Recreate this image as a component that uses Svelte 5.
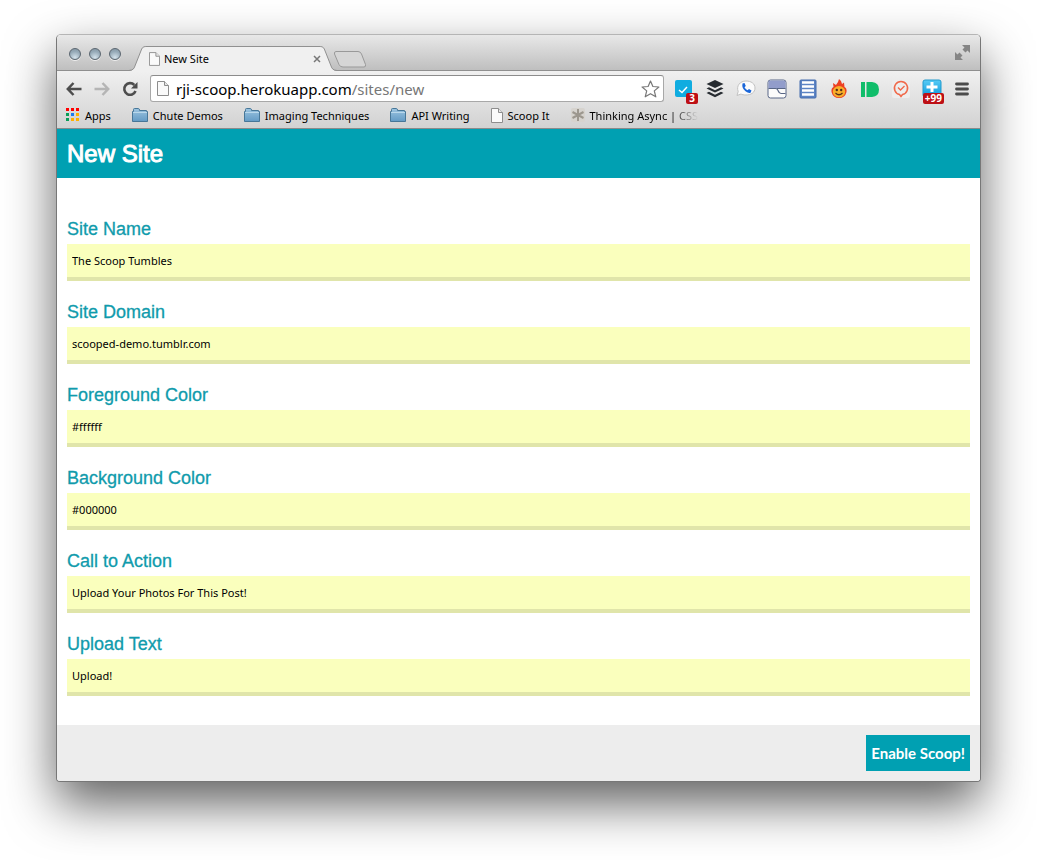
<script>
  let fields = $state([
    { id: 'site-name', label: 'Site Name', value: 'The Scoop Tumbles' },
    { id: 'site-domain', label: 'Site Domain', value: 'scooped-demo.tumblr.com' },
    { id: 'foreground', label: 'Foreground Color', value: '#ffffff' },
    { id: 'background', label: 'Background Color', value: '#000000' },
    { id: 'call-to-action', label: 'Call to Action', value: 'Upload Your Photos For This Post!' },
    { id: 'upload-text', label: 'Upload Text', value: 'Upload!' }
  ]);

  const bookmarks = [
    { icon: 'apps', text: 'Apps' },
    { icon: 'folder', text: 'Chute Demos' },
    { icon: 'folder', text: 'Imaging Techniques' },
    { icon: 'folder', text: 'API Writing' },
    { icon: 'page', text: 'Scoop It' },
    { icon: 'star', text: 'Thinking Async | CSS', fade: true }
  ];

  const dots = ['#f00', '#f00', '#f00', '#0a9d58', '#1a7cf0', '#ffb000', '#0a9d58', '#ffb000', '#ffb000'];
</script>

{#snippet page(w, h)}
  <svg width={w} height={h} viewBox="0 0 12 15" aria-hidden="true">
    <path d="M.5.5H7.500L11.500 4.500V14.500H.5Z" fill="#fafafa" stroke="#8d8d8d" />
    <path d="M7.500.5V4.500H11.500" fill="#e6e6e6" stroke="#8d8d8d" />
  </svg>
{/snippet}

<div class="window">
  <header class="tabstrip">
    <div class="lights">
      <button aria-label="Close window"></button>
      <button aria-label="Minimize window"></button>
      <button aria-label="Zoom window"></button>
    </div>
    <div class="tab">
      <svg class="shape" viewBox="0 0 210 25" preserveAspectRatio="none" aria-hidden="true">
        <path d="M0 25C4 24.500 5 23 6 20L12 5C13 2 14 .5 17 .5H193C196 .5 197 2 198 5L204 20C205 23 206 24.500 210 25Z" fill="#f0f0f0" />
        <path d="M0 24.500C4 24 5 23 6 20L12 5C13 2 14 .5 17 .5H193C196 .5 197 2 198 5L204 20C205 23 206 24 210 24.500" fill="none" stroke="#8f8f8f" />
      </svg>
      <span class="tab-icon">{@render page(11, 14)}</span>
      <span class="tab-title">New Site</span>
      <button class="close" aria-label="Close tab">
        <svg width="8" height="8" viewBox="0 0 8 8"><path d="M1 1L7 7M7 1L1 7" stroke="#777" stroke-width="1.500" /></svg>
      </button>
    </div>
    <button class="newtab" aria-label="New tab">
      <svg width="34" height="17" viewBox="0 0 34 17"><path d="M3 .5H25Q27.500.5 28.500 3L32.500 13.500Q33 16 31 16H10Q7 16 6 13.500L1.500 3Q1 .5 3 .5Z" fill="#d6d6d6" stroke="#999" /></svg>
    </button>
    <button class="expand" aria-label="Full screen">
      <svg width="15" height="15" viewBox="0 0 15 15" fill="#858585"><path d="M7 0H15V8L12.500 5.500L10.500 7.500L7.500 4.500L9.500 2.500ZM8 15H0V7L2.500 9.500L4.500 7.500L7.500 10.500L5.500 12.500Z" /></svg>
    </button>
  </header>

  <nav class="toolbar" aria-label="Browser">
    <div class="row">
      <button class="nav" aria-label="Back">
        <svg width="16" height="14" viewBox="0 0 16 14" fill="none" stroke="#4d4d4d" stroke-width="2.500"><path d="M2 7H15.500M7.500 1L1.800 7L7.500 13" /></svg>
      </button>
      <button class="nav" aria-label="Forward">
        <svg width="16" height="14" viewBox="0 0 16 14" fill="none" stroke="#b5b5b5" stroke-width="2.500"><path d="M.5 7H14M8.500 1L14.200 7L8.500 13" /></svg>
      </button>
      <button class="nav" aria-label="Reload">
        <svg width="16" height="16" viewBox="0 0 16 16"><path d="M12.300 4A5.800 5.800 0 1 0 13.500 10" fill="none" stroke="#4d4d4d" stroke-width="2.600" /><path d="M15.500 1V7.500H9Z" fill="#4d4d4d" /></svg>
      </button>
      <div class="omnibox">
        {@render page(12, 15)}
        <span class="url">rji-scoop.herokuapp.com<span>/sites/new</span></span>
        <button aria-label="Bookmark this page">
          <svg width="19" height="18" viewBox="0 0 19 18"><path d="M9.500 1L11.900 6.500L17.900 7L13.300 10.900L14.800 16.800L9.500 13.700L4.200 16.800L5.700 10.900L1.100 7L7.100 6.500Z" fill="#fff" stroke="#777" stroke-width="1.200" stroke-linejoin="round" /></svg>
        </button>
      </div>
      <div class="extensions">
        <button aria-label="Tasks">
          <svg width="20" height="20" viewBox="0 0 20 20"><rect x="1" y="1" width="17" height="17" rx="2" fill="#10ace0" /><path d="M5 11L8 13.500L13 8" fill="none" stroke="#fff" stroke-width="1.500" /></svg>
          <span class="badge">3</span>
        </button>
        <button aria-label="Layers">
          <svg width="20" height="20" viewBox="0 0 20 20" fill="#262b30"><path d="M10 1L18.500 5L10 9L1.500 5Z" /><path d="M1.500 9.500L4 8.300L10 11.200L16 8.300L18.500 9.500L10 13.600Z" /><path d="M1.500 14L4 12.800L10 15.700L16 12.800L18.500 14L10 18.200Z" /></svg>
        </button>
        <button aria-label="Phone">
          <svg width="20" height="20" viewBox="0 0 20 20"><path d="M10 2C15 2 19 4.500 19 9S15 16 10 16C7.500 16 6 15.600 5 15L1 16.500L2.200 12.500C0 7 4 2 10 2Z" fill="#fbfbfb" stroke="#c2c2c2" /><path d="M6.500 4.500L8.500 4L9.800 7L8.500 8.300Q9.500 10.200 11.500 11.200L13 10L15.500 11.600L14.500 13.800Q12.500 14.500 9.500 12.300Q5.500 9 6.500 4.500Z" fill="#1a66d9" /></svg>
        </button>
        <button aria-label="Window panes">
          <svg width="20" height="20" viewBox="0 0 20 20"><rect x="1" y="1" width="18" height="18" rx="2.500" fill="#fbfbfb" stroke="#596787" /><path d="M1.500 2.500Q1.500 1.500 3 1.500H17Q18.500 1.500 18.500 3V9.500H1.500Z" fill="#929dcb" /><path d="M1.500 9.500H8.500Q10.500 9.500 11.300 12T14 14.500H18.500" fill="none" stroke="#596787" stroke-width="1.200" /><path d="M9.500 9.500H18.500" stroke="#596787" /></svg>
        </button>
        <button aria-label="List">
          <svg width="20" height="20" viewBox="0 0 20 20"><rect x="2" y="1" width="16" height="18" rx="1" fill="#5c84c5" stroke="#456dae" /><path d="M4 3.500H16M4 7.500H16M4 11.500H16M4 15.500H16" stroke="#fff" stroke-width="2.500" /></svg>
        </button>
        <button aria-label="Flame">
          <svg width="20" height="20" viewBox="0 0 20 20"><path d="M10 0Q13 2 13 5L15 3.500L15.500 8Q18 9 17.500 13Q16 19 10 19T2.500 13Q2 9 4.500 8L4 4L7 6Q9.500 3 10 0Z" fill="#ec4023" /><ellipse cx="10" cy="12.700" rx="6.200" ry="5.600" fill="#f9ae2a" /><circle cx="7.800" cy="11" r="1.200" fill="#57301a" /><circle cx="12.200" cy="11" r="1.200" fill="#57301a" /><path d="M6.500 14Q10 17.500 13.500 14" fill="none" stroke="#57301a" stroke-width="1.200" /></svg>
        </button>
        <button aria-label="Push">
          <svg width="20" height="20" viewBox="0 0 20 20" fill="#10bd6a"><path d="M1 3H5V18H1ZM6.500 3H12Q19 3.500 19 10.500T12 18H6.500Z" /></svg>
        </button>
        <button aria-label="Check marker">
          <svg width="20" height="20" viewBox="0 0 20 20"><rect x="1" y="1" width="18" height="18" rx="2" fill="#ededed" /><path d="M8.500 15.500A6.600 6.600 0 1 1 11.500 15.500L10 17.500Z" fill="none" stroke="#f0694a" stroke-width="1.500" /><path d="M7 8.500L9.500 11L13.500 7" fill="none" stroke="#f0694a" stroke-width="1.400" /></svg>
        </button>
        <button aria-label="Add">
          <svg width="20" height="20" viewBox="0 0 20 20"><defs><linearGradient id="sky" x2="0" y2="1"><stop stop-color="#58cbf5" /><stop offset="1" stop-color="#0b98dc" /></linearGradient></defs><rect x="1" y="1" width="18" height="17" rx="2" fill="url(#sky)" stroke="#239bcd" /><path d="M8.500 3H11.500V6.500H15.500V9.500H11.500V13H8.500V9.500H4.500V6.500H8.500Z" fill="#fff" /></svg>
          <span class="badge wide">+99</span>
        </button>
        <button class="menu" aria-label="Menu">
          <svg width="14" height="14" viewBox="0 0 14 14"><path d="M1.500 2H12.500M1.500 7H12.500M1.500 12H12.500" stroke="#4b4b4b" stroke-width="2.800" stroke-linecap="round" /></svg>
        </button>
      </div>
    </div>

    <div class="bookmarks">
      {#each bookmarks as mark}
        <a href="#bookmark" class:fade={mark.fade}>
          {#if mark.icon === 'apps'}
            <svg width="14" height="14" viewBox="0 0 14 14" aria-hidden="true">
              {#each dots as fill, i}
                <rect x={(i % 3) * 5} y={Math.floor(i / 3) * 5} width="3" height="3" {fill} />
              {/each}
            </svg>
          {:else if mark.icon === 'folder'}
            <svg width="16" height="15" viewBox="0 0 16 15" aria-hidden="true">
              <defs><linearGradient id="folder" x2="0" y2="1"><stop stop-color="#9cc4e0" /><stop offset="1" stop-color="#639bc5" /></linearGradient></defs>
              <path d="M.5 13.500V3.500H1.500V1.500Q1.500.5 2.500.5H6.500Q7.500.5 7.500 2.500H14.500V3.500H15.500V13.500Z" fill="url(#folder)" stroke="#477798" />
              <path d="M1 4.500H15" stroke="#b9d8eb" />
            </svg>
          {:else if mark.icon === 'page'}
            {@render page(12, 15)}
          {:else}
            <svg width="14" height="14" viewBox="0 0 14 14" aria-hidden="true"><rect width="14" height="14" rx="2" fill="#d6d3ce" /><path d="M7 1V13M1.500 4L12.500 10M12.500 4L1.500 10" stroke="#9c978e" stroke-width="2" /></svg>
          {/if}
          <span>{mark.text}</span>
        </a>
      {/each}
    </div>
  </nav>

  <main>
    <h1>New Site</h1>
    <form onsubmit={(e) => e.preventDefault()}>
      <div class="fields">
        {#each fields as field}
          <div class="field">
            <label for={field.id}>{field.label}</label>
            <input id={field.id} type="text" bind:value={field.value} />
          </div>
        {/each}
      </div>
      <footer><button type="submit">Enable Scoop!</button></footer>
    </form>
  </main>
</div>

<style>
  :global(body) {
    background: #fff;
    overflow-x: hidden;
  }
  * { box-sizing: border-box; }
  svg { display: block; flex: none; }
  button {
    padding: 0;
    border: 0;
    background: none;
    font: inherit;
  }
  .window {
    margin: 34px 56px 78px;
    border: 1px solid #777;
    border-top-color: #b5b5b5;
    border-radius: 5px 5px 4px 4px;
    background: #fff;
    background-clip: padding-box;
    box-shadow: 0 22px 50px rgba(0, 0, 0, 0.62);
    font-family: "Noto Sans", sans-serif;
    font-size: 11px;
    color: #000;
  }
  .tabstrip {
    display: flex;
    height: 36px;
    padding-left: 12px;
    align-items: flex-end;
    border-bottom: 1px solid #8f8f8f;
    border-radius: 4px 4px 0 0;
    background: linear-gradient(#e8e8e8, #bfbfbf);
  }
  .lights {
    display: flex;
    gap: 8px;
    align-self: center;
    padding-top: 2px;
  }
  .lights button {
    width: 12px;
    height: 12px;
    border: 1px solid #5b6670;
    border-radius: 50%;
    background: radial-gradient(circle at 50% 85%, #d5e3ec, #96aab8 60%, #8193a0);
    box-shadow: 0 1px 0 #eee;
  }
  .tab {
    position: relative;
    display: flex;
    align-items: center;
    width: 208px;
    height: 25px;
    margin: 0 -4px -1px 8px;
    padding: 0 16px 0 20px;
  }
  .shape {
    position: absolute;
    inset: 0;
    width: 100%;
    height: 100%;
  }
  .tab-icon, .tab-title, .close { position: relative; }
  .tab-title { flex: 1; margin-left: 4px; }
  .newtab { margin-bottom: 2px; }
  .expand { margin: 0 10px 10px auto; }
  .toolbar {
    border-bottom: 1px solid #8b8b8b;
    background: linear-gradient(#f0f0f0, #d2d2d2);
  }
  .row {
    display: flex;
    align-items: center;
    padding: 4px 9px 0;
    gap: 12px;
  }
  .nav {
    display: grid;
    place-items: center;
    width: 16px;
    height: 24px;
  }
  .omnibox {
    display: flex;
    flex: 1;
    align-items: center;
    height: 27px;
    padding: 0 3px 0 6px;
    border: 1px solid #a8a8a8;
    border-top-color: #8c8c8c;
    border-radius: 3px;
    background: #fff;
  }
  .url {
    flex: 1;
    margin-left: 7px;
    font-size: 15px;
    white-space: nowrap;
  }
  .url span { color: #777; }
  .extensions {
    display: flex;
    gap: 11px;
    margin-left: -2px;
  }
  .extensions button {
    position: relative;
    display: grid;
    place-items: center;
    width: 20px;
    height: 20px;
  }
  .extensions .menu { width: 18px; }
  .badge {
    position: absolute;
    right: -4px;
    bottom: -5px;
    padding: 0 3px;
    border-radius: 2px;
    background: #bd0f15;
    color: #fff;
    font-size: 10px;
    font-weight: 700;
    line-height: 11px;
  }
  .wide { right: -2px; padding: 0 2px; }
  .bookmarks {
    display: flex;
    gap: 21px;
    height: 26px;
    padding: 0 9px;
    align-items: center;
    white-space: nowrap;
  }
  .bookmarks a {
    display: flex;
    align-items: center;
    gap: 5px;
    color: #000;
    text-decoration: none;
  }
  .bookmarks .fade { mask-image: linear-gradient(90deg, #000 78%, transparent); }
  h1 {
    margin: 0;
    padding: 0 10px;
    background: #00a0b2;
    color: #fff;
    font: 24px/49px "Liberation Sans", Arial, sans-serif;
    -webkit-text-stroke: 1px #fff;
  }
  .fields {
    display: flex;
    flex-direction: column;
    gap: 20px;
    padding: 40px 10px 29px;
  }
  .field { display: flex; flex-direction: column; }
  label {
    color: #109bac;
    font: 18px/22px "Liberation Sans", Arial, sans-serif;
    padding-bottom: 4px;
    -webkit-text-stroke: 0.3px #109bac;
  }
  input {
    width: 100%;
    height: 37px;
    padding: 0 5px;
    border: 0;
    border-bottom: 4px solid #e0e5aa;
    border-radius: 0;
    outline: 0;
    background: #faffbd;
    color: #000;
    font: 11px "Noto Sans", sans-serif;
  }
  footer {
    display: flex;
    justify-content: flex-end;
    padding: 10px;
    border-radius: 0 0 3px 3px;
    background: #ededed;
  }
  footer button {
    height: 36px;
    padding: 0 5px;
    background: #00a0b2;
    color: #fff;
    font: 700 15px Lato, sans-serif;
  }
</style>
